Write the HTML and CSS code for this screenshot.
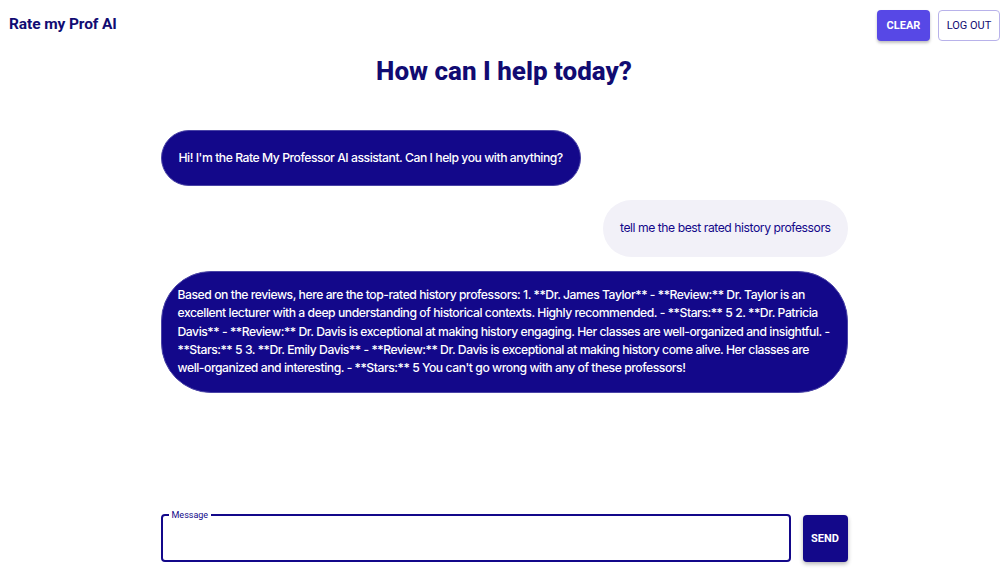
FILE: index.html
```html
<!DOCTYPE html>
<html lang="en">
<head>
<meta charset="utf-8">
<title>Rate my Prof AI</title>
<link rel="stylesheet" href="styles.css">
</head>
<body>
<div class="page">
  <header class="topbar">
    <div class="brand">Rate my Prof AI</div>
    <div class="actions">
      <button class="btn btn-clear">Clear</button>
      <button class="btn btn-logout">Log out</button>
    </div>
  </header>
  <h1 class="title">How can I help today?</h1>
  <main class="chat">
    <div class="msg msg-bot">Hi! I'm the Rate My Professor AI assistant. Can I help you with anything?</div>
    <div class="msg msg-user">tell me the best rated history professors</div>
    <div class="msg msg-bot msg-long">Based on the reviews, here are the top-rated history professors: 1. **Dr. James Taylor** - **Review:** Dr. Taylor is an excellent lecturer with a deep understanding of historical contexts. Highly recommended. - **Stars:** 5 2. **Dr. Patricia Davis** - **Review:** Dr. Davis is exceptional at making history engaging. Her classes are well-organized and insightful. - **Stars:** 5 3. **Dr. Emily Davis** - **Review:** Dr. Davis is exceptional at making history come alive. Her classes are well-organized and interesting. - **Stars:** 5 You can't go wrong with any of these professors!</div>
  </main>
  <form class="composer">
    <fieldset class="field">
      <legend class="field-label">Message</legend>
      <input class="field-input" type="text" aria-label="Message">
    </fieldset>
    <button type="button" class="btn btn-send">Send</button>
  </form>
</div>
</body>
</html>
```
FILE: styles.css
```css
* { box-sizing: border-box; }
html, body { margin: 0; padding: 0; background: #ffffff; }
body { font-family: "Inter", "Roboto", sans-serif; color: #110b72; }

.page {
  height: 100vh;
  display: flex;
  flex-direction: column;
}

.topbar {
  display: flex;
  justify-content: space-between;
  align-items: flex-start;
  padding: 10px 8px 0 9px;
}
.brand {
  font-family: "Roboto", sans-serif;
  font-weight: 700;
  font-size: 15.5px;
  line-height: 20px;
  padding-top: 4px;
  color: #110b72;
  letter-spacing: -0.1px;
}
.actions { display: flex; gap: 8px; }

.btn {
  font-family: "Roboto", sans-serif;
  font-weight: 500;
  text-transform: uppercase;
  border-radius: 4px;
  cursor: pointer;
  padding: 0;
}
.btn-clear {
  width: 53px;
  height: 31px;
  font-size: 11px;
  font-weight: 700;
  background: #5748e6;
  color: #fff;
  border: none;
  box-shadow: 0 2px 3px rgba(0,0,0,0.25);
}
.btn-logout {
  width: 62px;
  height: 31px;
  font-size: 11px;
  background: #fff;
  color: #110b72;
  border: 1px solid #b8b2ea;
  font-weight: 400;
}

.title {
  margin: 14px 0 0;
  text-align: center;
  font-family: "Roboto", sans-serif;
  font-weight: 800;
  font-size: 26px;
  line-height: 32px;
  color: #110b72;
}

.chat {
  flex: 1;
  width: 687px;
  margin: 43px auto 0;
  display: flex;
  flex-direction: column;
  align-items: flex-start;
  gap: 14px;
}
.msg {
  font-size: 12.2px;
  font-weight: 500;
  line-height: 18.25px;
  padding: 18px 17px;
  border-radius: 50px;
  letter-spacing: -0.46px;
}
.msg-bot {
  background: #13088a;
  color: #fff;
  border: 1px solid #4a44a6;
}
.msg-user {
  align-self: flex-end;
  padding: 19px 17px;
  background: #f2f1f8;
  color: #13088a;
  font-weight: 400;
}
.msg-long {
  padding: 14.5px 16px;
}

.composer {
  width: 687px;
  margin: 0 auto;
  display: flex;
  align-items: flex-end;
  gap: 12px;
  padding-bottom: 14px;
}
.field {
  flex: 1;
  margin: 0;
  padding: 0 8px;
  height: 52px;
  border: 2px solid #13088a;
  border-radius: 4px;
}
.field-label {
  font-family: "Roboto", sans-serif;
  font-size: 9px;
  line-height: 10px;
  padding: 0 3px;
  margin-left: -2px;
  color: #13088a;
}
.field-input {
  width: 100%;
  height: 38px;
  border: none;
  outline: none;
  background: transparent;
  font-size: 14px;
}
.btn-send {
  width: 45px;
  height: 47px;
  font-size: 11px;
  font-weight: 700;
  background: #13088a;
  color: #fff;
  border: none;
  box-shadow: 0 2px 4px rgba(0,0,0,0.3);
}
```
